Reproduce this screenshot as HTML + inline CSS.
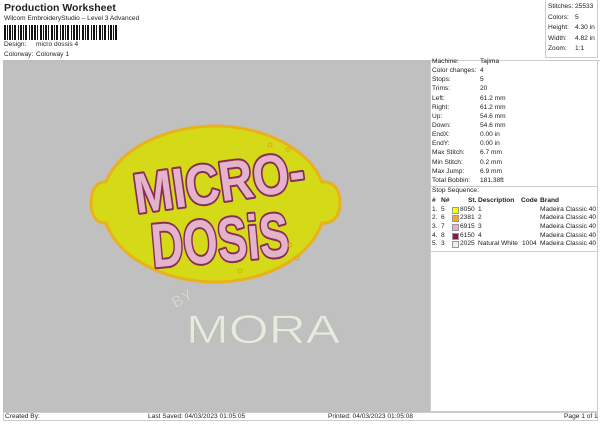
<!DOCTYPE html>
<html><head><meta charset="utf-8"><style>
*{margin:0;padding:0;box-sizing:border-box}
body{width:600px;height:424px;background:#fff;font-family:"Liberation Sans",sans-serif;font-size:6.6px;color:#222;position:relative;overflow:hidden}
.a{position:absolute;white-space:nowrap}
.r{position:relative;height:9.15px;line-height:9.15px}
.s{position:relative;height:8.7px;line-height:8.7px}
</style></head><body>
<div class="a" style="left:4px;top:2px;font-size:10.5px;font-weight:bold;">Production Worksheet</div>
<div class="a" style="left:4px;top:15px;">Wilcom EmbroideryStudio – Level 3 Advanced</div>
<svg class="a" style="left:4px;top:25px" width="114" height="15">
<g fill="#111">
<rect x="0" y="0" width="2" height="15"/><rect x="3" y="0" width="1" height="15"/><rect x="5" y="0" width="2" height="15"/><rect x="8" y="0" width="1" height="15"/><rect x="10" y="0" width="2" height="15"/><rect x="14" y="0" width="1" height="15"/><rect x="16" y="0" width="2" height="15"/><rect x="19" y="0" width="1" height="15"/><rect x="21" y="0" width="2" height="15"/><rect x="25" y="0" width="1" height="15"/><rect x="27" y="0" width="2" height="15"/><rect x="30" y="0" width="2" height="15"/><rect x="33" y="0" width="1" height="15"/><rect x="36" y="0" width="2" height="15"/><rect x="39" y="0" width="1" height="15"/><rect x="41" y="0" width="2" height="15"/><rect x="44" y="0" width="1" height="15"/><rect x="47" y="0" width="2" height="15"/><rect x="50" y="0" width="1" height="15"/><rect x="52" y="0" width="2" height="15"/><rect x="56" y="0" width="1" height="15"/><rect x="58" y="0" width="2" height="15"/><rect x="61" y="0" width="1" height="15"/><rect x="63" y="0" width="2" height="15"/><rect x="67" y="0" width="1" height="15"/><rect x="69" y="0" width="2" height="15"/><rect x="72" y="0" width="2" height="15"/><rect x="75" y="0" width="1" height="15"/><rect x="78" y="0" width="2" height="15"/><rect x="81" y="0" width="1" height="15"/><rect x="83" y="0" width="2" height="15"/><rect x="87" y="0" width="1" height="15"/><rect x="89" y="0" width="2" height="15"/><rect x="92" y="0" width="1" height="15"/><rect x="95" y="0" width="2" height="15"/><rect x="98" y="0" width="1" height="15"/><rect x="100" y="0" width="2" height="15"/><rect x="104" y="0" width="1" height="15"/><rect x="106" y="0" width="2" height="15"/><rect x="109" y="0" width="1" height="15"/><rect x="111" y="0" width="2" height="15"/>
</g></svg>
<div class="a" style="left:4px;top:41px;">Design:</div><div class="a" style="left:36px;top:41px;">micro dossis 4</div>
<div class="a" style="left:4px;top:51px;">Colorway:</div><div class="a" style="left:36px;top:51px;">Colorway 1</div>

<div class="a" style="left:545px;top:0;width:53px;height:58px;border-left:1px solid #ccc;border-right:1px solid #ccc;border-bottom:1px solid #ccc;"></div>
<div class="a" style="left:548px;top:2px;line-height:10.5px;">Stitches:<br>Colors:<br>Height:<br>Width:<br>Zoom:</div>
<div class="a" style="left:575px;top:2px;line-height:10.5px;">25533<br>5<br>4.30 in<br>4.82 in<br>1:1</div>

<div class="a" style="left:3px;top:60px;width:597px;height:1px;background:#ccc"></div>
<div class="a" style="left:3px;top:60px;width:427px;height:352px;background:#c0c0c0"></div>
<div class="a" style="left:430px;top:60px;width:168px;height:352px;border:1px solid #ccc;border-top:none"></div>
<div class="a" style="left:3px;top:412px;width:595px;height:9px;border:1px solid #ccc;"></div>
<div class="a" style="left:5px;top:413px;">Created By:</div>
<div class="a" style="left:148px;top:413px;">Last Saved: 04/03/2023 01:05:05</div>
<div class="a" style="left:328px;top:413px;">Printed: 04/03/2023 01:05:08</div>
<div class="a" style="left:564px;top:413px;">Page 1 of 1</div>

<svg class="a" style="left:3px;top:60px" width="427" height="352" viewBox="3 60 427 352">
<path d="M215 126 C265 126 310 150 322 182 C334 181 340 190 340 203 C340 216 333 224 322 223 C310 258 265 282 215 282 C165 282 118 258 106 223 C97 224 91 216 91 203 C91 190 97 181 106 182 C118 150 165 126 215 126Z" fill="#d4da18" stroke="#e9b11a" stroke-width="3"/>
<g font-family="Liberation Sans,sans-serif" font-weight="bold" fill="#e3b3cc" stroke="#8a2c55" stroke-width="4" paint-order="stroke" stroke-linejoin="round">
<text x="132" y="202" font-size="56" transform="rotate(-8 215 175)" textLength="172" lengthAdjust="spacingAndGlyphs">MICRO-</text>
<text x="150" y="262" font-size="62" transform="rotate(-5 215 230)" textLength="138" lengthAdjust="spacingAndGlyphs">DOSiS</text>
</g>
<g fill="none" stroke="#e0a810" stroke-width="1"><circle cx="270" cy="145" r="2"/><circle cx="288" cy="150" r="2"/><circle cx="290" cy="245" r="2"/><circle cx="297" cy="258" r="2"/><circle cx="240" cy="271" r="2"/></g>
<g font-family="Liberation Sans,sans-serif" fill="#e6ebe0" stroke="#b8bdb2" stroke-width="0.6">
<text x="172" y="305" font-size="16" transform="rotate(-30 180 300)">BY</text>
<text x="186" y="343" font-size="40" textLength="154" lengthAdjust="spacingAndGlyphs">MORA</text>
</g>
</svg>

<div class="a" style="left:432px;top:57px;width:160px;">
<div class="r">Machine:<span class="a" style="left:48px">Tajima</span></div>
<div class="r">Color changes:<span class="a" style="left:48px">4</span></div>
<div class="r">Stops:<span class="a" style="left:48px">5</span></div>
<div class="r">Trims:<span class="a" style="left:48px">20</span></div>
<div class="r">Left:<span class="a" style="left:48px">61.2 mm</span></div>
<div class="r">Right:<span class="a" style="left:48px">61.2 mm</span></div>
<div class="r">Up:<span class="a" style="left:48px">54.6 mm</span></div>
<div class="r">Down:<span class="a" style="left:48px">54.6 mm</span></div>
<div class="r">EndX:<span class="a" style="left:48px">0.00 in</span></div>
<div class="r">EndY:<span class="a" style="left:48px">0.00 in</span></div>
<div class="r">Max Stitch:<span class="a" style="left:48px">6.7 mm</span></div>
<div class="r">Min Stitch:<span class="a" style="left:48px">0.2 mm</span></div>
<div class="r">Max Jump:<span class="a" style="left:48px">6.9 mm</span></div>
<div class="r">Total Bobbin:<span class="a" style="left:48px">181.38ft</span></div>
</div>
<div class="a" style="left:430px;top:186px;width:168px;height:1px;background:#ccc"></div>
<div class="a" style="left:432px;top:187px;">Stop Sequence:</div>
<div class="a" style="left:430px;top:251px;width:168px;height:1px;background:#ccc"></div>
<div class="a" style="left:432px;top:197px;width:166px;">
<div class="s" style="font-weight:bold;text-decoration:underline"><span class="a" style="left:0">#</span><span class="a" style="left:9px">N#</span><span class="a" style="left:36px">St.</span><span class="a" style="left:46px">Description</span><span class="a" style="left:89px">Code</span><span class="a" style="left:108px">Brand</span></div>
<div class="s"><span class="a">1.</span><span class="a" style="left:9px">5</span><span class="a" style="left:20px;top:1px;width:7px;height:7px;background:#ffff00;border:1px solid #999"></span><span class="a" style="left:28px">8050</span><span class="a" style="left:46px">1</span><span class="a" style="left:108px">Madeira Classic 40</span></div>
<div class="s"><span class="a">2.</span><span class="a" style="left:9px">6</span><span class="a" style="left:20px;top:1px;width:7px;height:7px;background:#f7a823;border:1px solid #999"></span><span class="a" style="left:28px">2381</span><span class="a" style="left:46px">2</span><span class="a" style="left:108px">Madeira Classic 40</span></div>
<div class="s"><span class="a">3.</span><span class="a" style="left:9px">7</span><span class="a" style="left:20px;top:1px;width:7px;height:7px;background:#f0a8d8;border:1px solid #999"></span><span class="a" style="left:28px">6915</span><span class="a" style="left:46px">3</span><span class="a" style="left:108px">Madeira Classic 40</span></div>
<div class="s"><span class="a">4.</span><span class="a" style="left:9px">8</span><span class="a" style="left:20px;top:1px;width:7px;height:7px;background:#8a1846;border:1px solid #999"></span><span class="a" style="left:28px">6150</span><span class="a" style="left:46px">4</span><span class="a" style="left:108px">Madeira Classic 40</span></div>
<div class="s"><span class="a">5.</span><span class="a" style="left:9px">3</span><span class="a" style="left:20px;top:1px;width:7px;height:7px;background:#eeeeee;border:1px solid #999"></span><span class="a" style="left:28px">2025</span><span class="a" style="left:46px">Natural White</span><span class="a" style="left:90px">1004</span><span class="a" style="left:108px">Madeira Classic 40</span></div>
</div>
</body></html>
